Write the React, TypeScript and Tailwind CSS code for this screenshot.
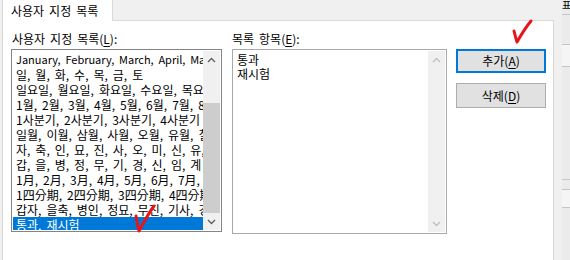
import React from "react";

const FONT = { fontFamily: '"Noto Sans CJK KR", "Noto Sans", sans-serif' };

const items = [
  "January, February, March, April, May, June, July",
  "일, 월, 화, 수, 목, 금, 토",
  "일요일, 월요일, 화요일, 수요일, 목요일",
  "1월, 2월, 3월, 4월, 5월, 6월, 7월, 8월",
  "1사분기, 2사분기, 3사분기, 4사분기",
  "일월, 이월, 삼월, 사월, 오월, 유월, 칠월",
  "자, 축, 인, 묘, 진, 사, 오, 미, 신, 유, 술",
  "갑, 을, 병, 정, 무, 기, 경, 신, 임, 계",
  "1月, 2月, 3月, 4月, 5月, 6月, 7月, 8月",
  "1四分期, 2四分期, 3四分期, 4四分期",
  "갑자, 을축, 병인, 정묘, 무진, 기사, 경오",
  "통과, 재시험",
];

function Chevron({ up, color }: { up?: boolean; color: string }) {
  return (
    <svg width="9" height="6" viewBox="0 0 9 6">
      <path
        d={up ? "M1 5 L4.5 1.5 L8 5" : "M1 1 L4.5 4.5 L8 1"}
        fill="none"
        stroke={color}
        strokeWidth="1.4"
      />
    </svg>
  );
}

function Mnemonic({ label, letter }: { label: string; letter: string }) {
  return (
    <>
      {label}(<span className="underline underline-offset-2">{letter}</span>)
    </>
  );
}

export default function App() {
  return (
    <div
      className="w-[570px] h-[260px] bg-[#f0f0f0] flex overflow-hidden text-[12px] text-black relative [word-spacing:2.3px]"
      style={FONT}
    >
      <div className="w-[562px] flex flex-col">
        {/* tab strip */}
        <div className="h-[21px] flex">
          <div className="w-[2px]" />
          <div className="w-[111px] bg-white border-l border-r border-[#d9d9d9] pl-[8px] leading-[21px]">
            사용자 지정 목록
          </div>
          <div className="w-[441px] border-b border-[#d9d9d9]" />
        </div>
        {/* panel */}
        <div className="ml-[2px] w-[552px] flex-1 bg-white border-l border-r border-[#d9d9d9] flex pl-[8px] pt-[10px]">
          <div className="w-[211px] flex flex-col">
            <div className="h-[16px] leading-[16px] mb-[2px] pl-[1px]">
              <Mnemonic label="사용자 지정 목록" letter="L" />:
            </div>
            <div className="h-[183px] border border-[#848484] p-[1px] flex">
              <div className="flex-1 min-w-0 overflow-hidden pt-[1px]">
                {items.map((it, i) => (
                  <div
                    key={i}
                    className={`h-[15px] leading-[15px] pl-[3px] whitespace-nowrap overflow-hidden ${
                      i === 0 ? "text-[11px]" : ""
                    } ${i === items.length - 1 ? "bg-[#0078d7] text-white" : ""}`}
                  >
                    {it}
                  </div>
                ))}
              </div>
              <div className="w-[17px] bg-[#f0f0f0] flex flex-col">
                <div className="h-[17px] flex items-center justify-center">
                  <Chevron up color="#606060" />
                </div>
                <div className="h-[35px]" />
                <div className="h-[110px] bg-[#cdcdcd]" />
                <div className="flex-1 flex items-center justify-center">
                  <Chevron color="#606060" />
                </div>
              </div>
            </div>
          </div>
          <div className="w-[215px] ml-[10px] flex flex-col">
            <div className="h-[16px] leading-[16px] mb-[2px]">
              <Mnemonic label="목록 항목" letter="E" />:
            </div>
            <div className="h-[185px] border border-[#a9a9a9] p-[1px] flex">
              <div className="flex-1 pl-[3px] pt-[2px] leading-[14px]">
                <div>통과</div>
                <div>재시험</div>
              </div>
              <div className="w-[17px] bg-[#f0f0f0] flex flex-col justify-between">
                <div className="h-[17px] flex items-center justify-center">
                  <Chevron up color="#c0c0c0" />
                </div>
                <div className="h-[17px] flex items-center justify-center">
                  <Chevron color="#c0c0c0" />
                </div>
              </div>
            </div>
          </div>
          <div className="w-[90px] ml-[9px] pt-[18px] flex flex-col gap-[10px]">
            <div className="h-[24px] bg-[#e1e1e1] border-2 border-[#0078d7] flex items-center justify-center">
              <span><Mnemonic label="추가" letter="A" /></span>
            </div>
            <div className="h-[25px] bg-[#e1e1e1] border border-[#adadad] flex items-center justify-center">
              <span><Mnemonic label="삭제" letter="D" /></span>
            </div>
          </div>
        </div>
      </div>
      {/* sheet behind the dialog */}
      <div className="w-[8px] flex">
        <div className="w-[1px] bg-[#9a9a9a]" />
        <div className="flex-1 bg-[#ebebeb] flex flex-col">
          <div className="h-[15px] border-b border-[#c6c6c6] overflow-hidden text-[10px] leading-[10px]">표</div>
          <div className="h-[30px] border-b border-[#c6c6c6]" />
          <div className="h-[22px] border-b border-[#c6c6c6] bg-[#f5f5f5]" />
          <div className="h-[113px] border-b border-[#c6c6c6]" />
          <div className="h-[10px] border-b border-[#c6c6c6]" />
          <div className="h-[18px] border-b border-[#c6c6c6] bg-[#f5f5f5]" />
          <div className="flex-1" />
        </div>
      </div>
      {/* red check marks */}
      <svg className="absolute left-[510px] top-[18px]" width="26" height="28" viewBox="0 0 26 28">
        <path d="M4 13 C5 17 6 21 7 24 C11 17 16 9 21 3" fill="none" stroke="#e8141c" strokeWidth="3" strokeLinecap="round" strokeLinejoin="round" />
      </svg>
      <svg className="absolute left-[132px] top-[203px]" width="26" height="32" viewBox="0 0 26 32">
        <path d="M4 13 C5 19 6 24 7 28 C11 21 16 11 22 3" fill="none" stroke="#e8141c" strokeWidth="3" strokeLinecap="round" strokeLinejoin="round" />
      </svg>
    </div>
  );
}
